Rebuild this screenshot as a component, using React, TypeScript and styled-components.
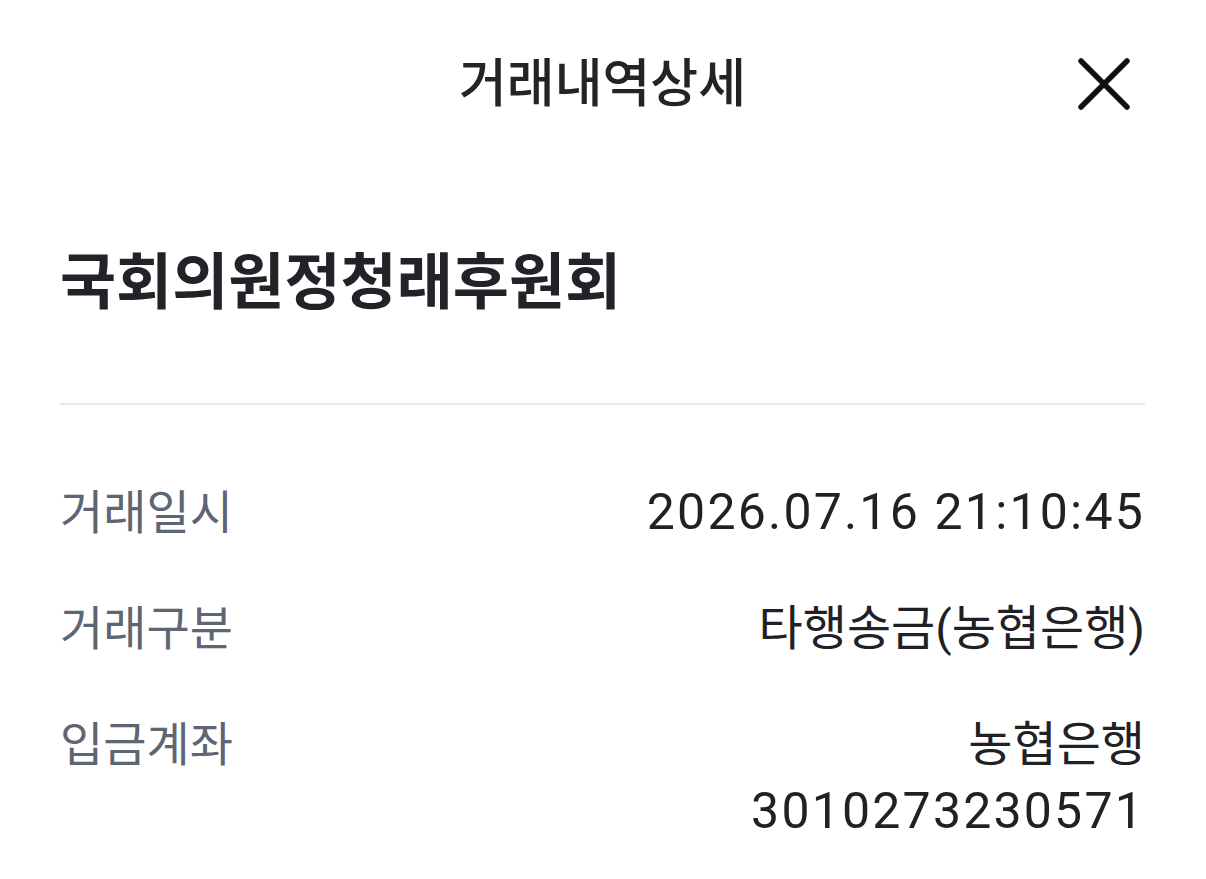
import styled, { createGlobalStyle } from "styled-components"

const Global = createGlobalStyle`
    body {
        margin: 0;
        background: #ffffff;
        font-family: Roboto, "Noto Sans CJK KR", sans-serif;
        color: #1f2125;
    }
`

const Page = styled.div`
    padding: 0 61px 0 60px;
`

const Header = styled.header`
    height: 170px;
    display: grid;
    grid-template-columns: 1fr auto 1fr;
    align-items: center;
`

const Title = styled.h1`
    grid-column: 2;
    margin: 0;
    font-size: 52px;
    line-height: 70px;
    font-weight: 500;
    color: #222428;
`

const Close = styled.button`
    grid-column: 3;
    justify-self: end;
    margin-right: 11px;
    margin-bottom: 2px;
    width: 60px;
    height: 60px;
    padding: 0;
    border: 0;
    background: none;
    display: flex;
    align-items: center;
    justify-content: center;
`

const Name = styled.h2`
    margin: 73px 0 0;
    font-size: 61px;
    line-height: 80px;
    font-weight: 700;
    color: #212328;
`

const Divider = styled.hr`
    margin: 80px 0 0;
    border: 0;
    height: 2px;
    background: #e8e9eb;
`

const List = styled.dl`
    margin: 74px 0 0;
    display: flex;
    flex-direction: column;
    gap: 49px;
`

const Row = styled.div`
    display: flex;
    justify-content: space-between;
    align-items: flex-start;
`

const Label = styled.dt`
    font-size: 47px;
    line-height: 67px;
    color: #5e6573;
`

const Value = styled.dd<{ $num?: boolean }>`
    margin: 0;
    text-align: right;
    font-size: ${p => (p.$num ? "50px" : "48px")};
    line-height: 67px;
    letter-spacing: ${p => (p.$num ? "2.2px" : "0")};
    color: #1f2125;
`

const rows = [
    { label: "거래일시", lines: [{ text: "2026.07.16 21:10:45", num: true }] },
    { label: "거래구분", lines: [{ text: "타행송금(농협은행)", num: false }] },
    {
        label: "입금계좌",
        lines: [
            { text: "농협은행", num: false },
            { text: "3010273230571", num: true },
        ],
    },
]

const App = () => {
    return (
        <Page>
            <Global />
            <Header>
                <Title>거래내역상세</Title>
                <Close aria-label="닫기">
                    <svg width="56" height="56" viewBox="0 0 56 56">
                        <path d="M5 5 L51 51 M51 5 L5 51" stroke="#111" strokeWidth="5.5" strokeLinecap="round" />
                    </svg>
                </Close>
            </Header>
            <Name>국회의원정청래후원회</Name>
            <Divider />
            <List>
                {rows.map(r => (
                    <Row key={r.label}>
                        <Label>{r.label}</Label>
                        <div>
                            {r.lines.map(l => (
                                <Value key={l.text} $num={l.num}>{l.text}</Value>
                            ))}
                        </div>
                    </Row>
                ))}
            </List>
        </Page>
    )
}

export default App
